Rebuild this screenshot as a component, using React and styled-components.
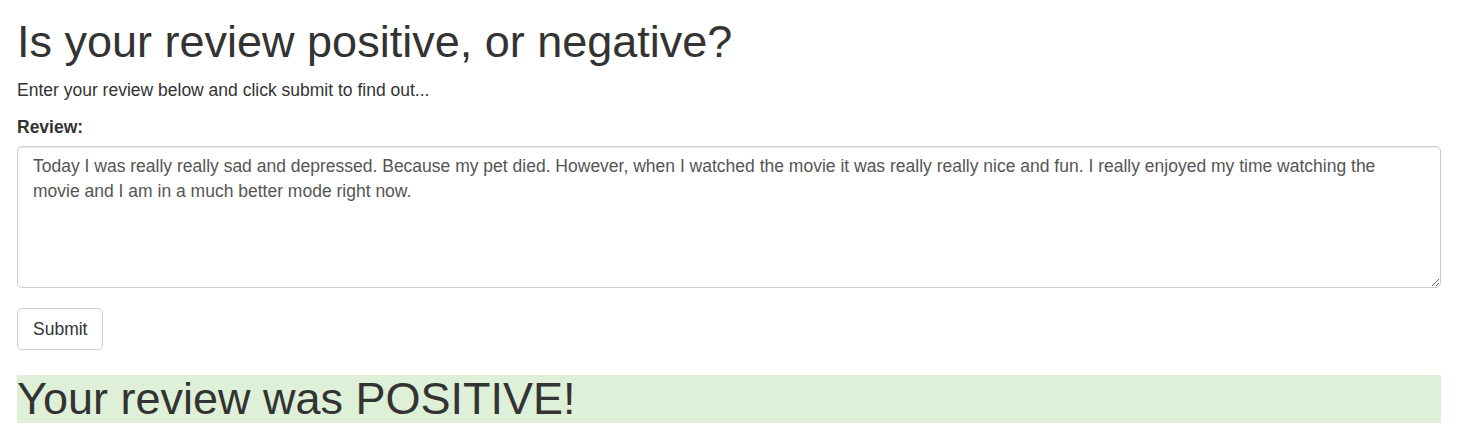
import React from 'react';
import styled, { createGlobalStyle } from 'styled-components';

/********** Styling **********/
const GlobalStyle = createGlobalStyle`
  html, body {
    margin: 0;
    padding: 0;
    background: #fff;
  }
  body {
    font-family: "Liberation Sans", Arial, Helvetica, sans-serif;
    font-size: 17.5px;
    line-height: 1.42857;
    color: #333;
  }
  * { box-sizing: border-box; }
`
const Container = styled.div`
  padding: 17px 17px 0 17px;
`
const Title = styled.h1`
  margin: 0 0 11.5px 0;
  font-size: 45px;
  font-weight: 500;
  line-height: 1.1;
  color: #333;
`
const Lead = styled.p`
  margin: 0 0 12.5px 0;
`
const FormGroup = styled.div`
  margin-bottom: 20px;
`
const Label = styled.label`
  display: block;
  font-weight: bold;
  margin-bottom: 6px;
`
const TextArea = styled.textarea`
  display: block;
  width: 100%;
  height: 142px;
  padding: 7px 15px;
  font-family: inherit;
  font-size: 17.5px;
  line-height: 1.42857;
  color: #555;
  background: #fff;
  border: 1px solid #ccc;
  border-radius: 5px;
  box-shadow: inset 0 1px 1px rgba(0, 0, 0, 0.075);
  outline: none;
  resize: vertical;
`
const Button = styled.button`
  display: inline-block;
  height: 42px;
  padding: 0 15px;
  font-family: inherit;
  font-size: 17.5px;
  line-height: 40px;
  color: #333;
  background: #fff;
  border: 1px solid #ccc;
  border-radius: 5px;
  cursor: pointer;
`
const Result = styled.h1`
  margin: 25px 0 0 0;
  font-size: 45px;
  font-weight: 500;
  line-height: 48px;
  color: #333;
  background: ${({ $positive }) => ($positive ? '#dff0d8' : '#f2dede')};
`

/********** App Component **********/
const review =
  'Today I was really really sad and depressed. Because my pet died. However, when I watched the movie it was really really nice and fun. I really enjoyed my time watching the movie and I am in a much better mode right now.'

const App = () => {
  return (
    <>
      <GlobalStyle />
      <Container>
        <Title>Is your review positive, or negative?</Title>
        <Lead>Enter your review below and click submit to find out...</Lead>
        <FormGroup>
          <Label htmlFor="review">Review:</Label>
          <TextArea id="review" defaultValue={review} />
        </FormGroup>
        <Button type="submit">Submit</Button>
        <Result $positive>Your review was POSITIVE!</Result>
      </Container>
    </>
  )
}

export default App
